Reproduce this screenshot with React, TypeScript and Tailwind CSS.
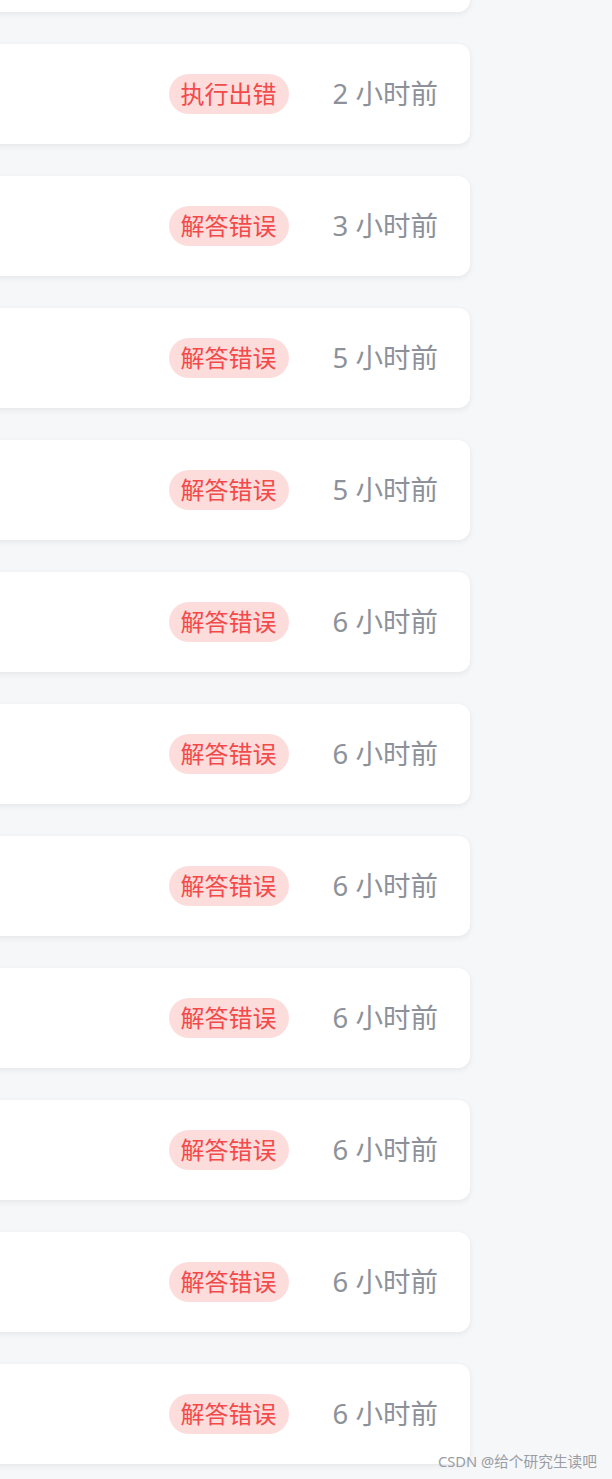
import React from "react";

const rows: { tag: string; time: string }[] = [
  { tag: "", time: "" },
  { tag: "执行出错", time: "2 小时前" },
  { tag: "解答错误", time: "3 小时前" },
  { tag: "解答错误", time: "5 小时前" },
  { tag: "解答错误", time: "5 小时前" },
  { tag: "解答错误", time: "6 小时前" },
  { tag: "解答错误", time: "6 小时前" },
  { tag: "解答错误", time: "6 小时前" },
  { tag: "解答错误", time: "6 小时前" },
  { tag: "解答错误", time: "6 小时前" },
  { tag: "解答错误", time: "6 小时前" },
  { tag: "解答错误", time: "6 小时前" },
];

export default function App() {
  return (
    <div
      className="relative w-[612px] h-[1479px] overflow-hidden bg-[#f6f7f9]"
      style={{ fontFamily: '"Noto Sans", "Noto Sans CJK SC", sans-serif' }}
    >
      <div className="flex flex-col gap-8 mt-[-88px] -ml-4 w-[486px]">
        {rows.map((r, i) => (
          <div
            key={i}
            className="h-[100px] shrink-0 rounded-xl bg-white shadow-[0_2px_6px_rgba(0,0,0,0.07)] flex items-center justify-end pr-8"
          >
            {r.tag && (
              <>
                <span className="h-10 px-3 rounded-full bg-[#fddcdc] text-[#f24a4a] text-[24px] leading-[40px]">
                  {r.tag}
                </span>
                <span className="ml-11 text-[27.5px] leading-none text-[#8d9199]">
                  {r.time}
                </span>
              </>
            )}
          </div>
        ))}
      </div>
      <div className="absolute right-[15px] top-[1451px] text-[14.7px] leading-5 text-[#9a9da3]">
        CSDN @给个研究生读吧
      </div>
    </div>
  );
}
